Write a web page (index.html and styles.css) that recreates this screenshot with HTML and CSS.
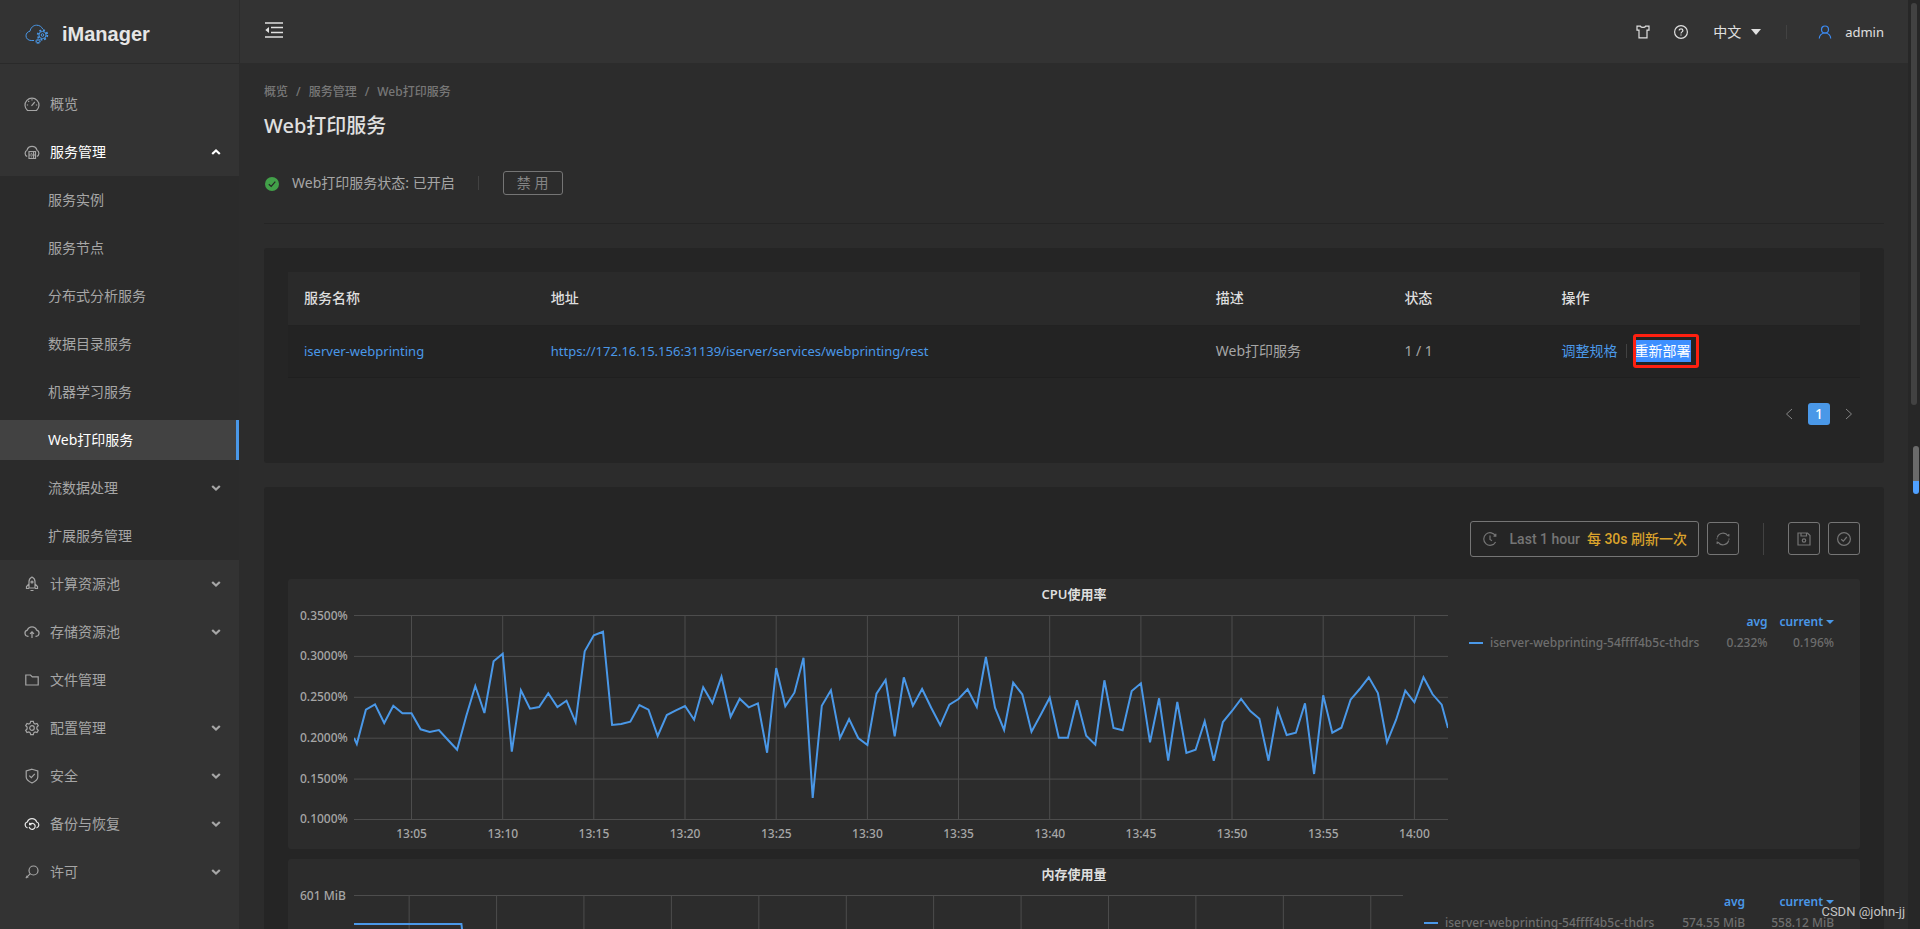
FILE: index.html
```html
<!DOCTYPE html>
<html lang="zh-CN">
<head>
<meta charset="utf-8">
<title>iManager - Web打印服务</title>
<link rel="stylesheet" href="styles.css">
</head>
<body>
<svg class="sprite" aria-hidden="true">
  <symbol id="i-down" viewBox="0 0 10 8"><path d="M1.2 2 5 5.6 8.8 2" stroke-width="2.2"/></symbol>
  <symbol id="i-up" viewBox="0 0 10 8"><path d="M1.2 6 5 2.4 8.8 6" stroke-width="2.2"/></symbol>
</svg>
<div class="app">
  <aside class="sidebar">
    <div class="brand">
      <svg class="brand-logo" viewBox="0 0 24 20"><path d="M9 16.5H6.2C3.2 16.5 1 14.5 1 11.8 1 9.4 2.7 7.6 5 7.2 5.6 3.8 8.2 1.2 11.6 1.2c3 0 5.2 1.600 6.200 4"/><circle cx="17.5" cy="11" r="3.6"/><circle cx="17.5" cy="11" r="1.3"/><circle cx="17.5" cy="11" r="4.8" stroke-width="1.8" stroke-dasharray="1.9 1.87"/><circle cx="13" cy="17.3" r="1.5"/><circle cx="13" cy="17.3" r="2.3" stroke-dasharray="1 .8"/></svg>
      <span>iManager</span>
    </div>
    <nav class="menu">
      <a class="item" href="#"><svg class="icon" viewBox="0 0 16 16"><path d="M3.500 14.500a7 7 0 1 1 9 0z"/><path d="M7.500 9.800 10.800 6M8 3.200v1.300M4.300 5l.8.8M2.800 9h1.300M13.200 9h-1.300"/></svg><span>概览</span></a>
      <a class="item open" href="#"><svg class="icon" viewBox="0 0 16 16"><path d="M3.200 12.500A3.500 3.500 0 0 1 3 6.200a5.200 5.200 0 0 1 10 0 3.500 3.500 0 0 1-.2 6.300"/><path d="M5 7.500h6.500v7H5zM5 11h6.500M6.800 9.300h1M6.800 12.800h1M9.500 7.500v7"/></svg><span>服务管理</span><svg class="chev"><use href="#i-up"/></svg></a>
      <div class="submenu">
        <a class="item" href="#"><span>服务实例</span></a>
        <a class="item" href="#"><span>服务节点</span></a>
        <a class="item" href="#"><span>分布式分析服务</span></a>
        <a class="item" href="#"><span>数据目录服务</span></a>
        <a class="item" href="#"><span>机器学习服务</span></a>
        <a class="item active" href="#"><span>Web打印服务</span></a>
        <a class="item" href="#"><span>流数据处理</span><svg class="chev"><use href="#i-down"/></svg></a>
        <a class="item" href="#"><span>扩展服务管理</span></a>
      </div>
      <a class="item" href="#"><svg class="icon" viewBox="0 0 16 16"><path d="M5 12V5.500C5 3.400 6.400 1.800 8 1c1.600.8 3 2.400 3 4.500V12zM5 8l-2.500 2.500V12.500H5M11 8l2.500 2.500V12.500H11M6.500 14.500h3"/><circle cx="8" cy="6" r="1"/></svg><span>计算资源池</span><svg class="chev"><use href="#i-down"/></svg></a>
      <a class="item" href="#"><svg class="icon" viewBox="0 0 16 16"><path d="M4.500 12.300H4A3.100 3.100 0 0 1 3.300 6.200a5 5 0 0 1 9.400 0A3.100 3.100 0 0 1 12 12.300h-.5M8 14V8M6 9.800l2-2 2 2"/></svg><span>存储资源池</span><svg class="chev"><use href="#i-down"/></svg></a>
      <a class="item" href="#"><svg class="icon" viewBox="0 0 16 16"><path d="M1.800 3h4.700l1.800 1.800h5.900V13H1.800z"/></svg><span>文件管理</span></a>
      <a class="item" href="#"><svg class="icon" viewBox="0 0 16 16"><path d="M6.700 1.300h2.600l.5 1.900 1.300.8 1.900-.6 1.300 2.300-1.400 1.400v1.800l1.400 1.400-1.300 2.300-1.900-.6-1.300.8-.5 1.900H6.700l-.5-1.900-1.300-.8-1.900.6-1.300-2.300 1.400-1.400V7.100L1.700 5.700 3 3.400l1.900.6 1.300-.8z"/><circle cx="8" cy="8" r="2.300"/></svg><span>配置管理</span><svg class="chev"><use href="#i-down"/></svg></a>
      <a class="item" href="#"><svg class="icon" viewBox="0 0 16 16"><path d="M8 1.200 13.800 3v6c0 2.600-2.600 4.500-5.800 6-3.200-1.500-5.800-3.400-5.800-6V3zM5.300 7.600l2 2 3.500-3.800"/></svg><span>安全</span><svg class="chev"><use href="#i-down"/></svg></a>
      <a class="item" href="#"><svg class="icon bright" viewBox="0 0 16 16"><path d="M3.500 11.800A3 3 0 0 1 3.300 6a5 5 0 0 1 9.400 0 3 3 0 0 1-.2 5.800"/><path d="M6 8.200a3 3 0 1 1-.8 2.600M5.600 6.800v1.900h1.900"/></svg><span>备份与恢复</span><svg class="chev"><use href="#i-down"/></svg></a>
      <a class="item" href="#"><svg class="icon" viewBox="0 0 16 16"><circle cx="9.500" cy="6.500" r="4.500"/><path d="M6.300 9.700 1.800 14.200M2.400 11.800l1.800 1.800"/></svg><span>许可</span><svg class="chev"><use href="#i-down"/></svg></a>
    </nav>
  </aside>

  <div class="main">
    <header class="topbar">
      <button class="fold" aria-label="收起菜单"><svg viewBox="0 0 18 16"><path d="M0 1h18M6 5.500h12M6 10.500h12M0 15h18" stroke-width="1.500"/><path class="solid" d="M4 5v6L.3 8z"/></svg></button>
      <div class="tools">
        <button aria-label="主题"><svg class="tool" viewBox="0 0 14 14"><path d="M1 1.200h3.400c.6 1.600 4.600 1.600 5.200 0H13v4H11v7.600H3V5.200H1z"/></svg></button>
        <button class="help" aria-label="帮助"><svg class="tool" viewBox="0 0 14 14"><circle cx="7" cy="7" r="6.400"/><path d="M5.200 5.600c0-2.300 3.700-2.200 3.700 0 0 1.300-1.900 1.300-1.900 2.800M7 9.500v1"/></svg></button>
        <button class="lang">中文<svg class="caret" viewBox="0 0 10 6"><path class="solid" d="M0 0h10L5 6z"/></svg></button>
        <span class="bar"></span>
        <button class="user"><svg class="tool" viewBox="0 0 14 14"><circle cx="7" cy="4.500" r="3.500"/><path d="M1.300 13.500c0-3 2.300-5.500 5.700-5.500s5.700 2.500 5.700 5.500"/></svg>admin</button>
      </div>
    </header>

    <main class="content">
      <nav class="crumbs"><a href="#">概览</a><i>/</i><a href="#">服务管理</a><i>/</i><span>Web打印服务</span></nav>
      <h1>Web打印服务</h1>
      <div class="status">
        <svg class="ok" viewBox="0 0 14 14"><circle cx="7" cy="7" r="7"/><path d="M3.800 7.200 6.200 9.500 10.300 4.700"/></svg>
        <span>Web打印服务状态: 已开启</span>
        <span class="bar"></span>
        <button class="disable">禁 用</button>
      </div>

      <section class="card services">
        <table class="grid">
          <colgroup><col class="c-name"><col class="c-url"><col class="c-desc"><col class="c-state"><col class="c-ops"></colgroup>
          <thead><tr><th>服务名称</th><th>地址</th><th>描述</th><th>状态</th><th>操作</th></tr></thead>
          <tbody><tr>
            <td class="latin"><a href="#">iserver-webprinting</a></td>
            <td class="latin"><a href="#">https://172.16.15.156:31139/iserver/services/webprinting/rest</a></td>
            <td>Web打印服务</td>
            <td>1 / 1</td>
            <td><div class="ops"><a href="#">调整规格</a><span class="bar"></span><a class="selected" href="#">重新部署</a></div></td>
          </tr></tbody>
        </table>
        <div class="pager">
          <button aria-label="上一页"><svg viewBox="0 0 8 12"><path d="M7 1 1.500 6 7 11"/></svg></button>
          <button class="current">1</button>
          <button aria-label="下一页"><svg viewBox="0 0 8 12"><path d="M1 1 6.500 6 1 11"/></svg></button>
        </div>
      </section>

      <section class="card monitor">
        <div class="actions">
          <button class="range"><svg class="tool" viewBox="0 0 14 14"><path d="M12.600 4A6.300 6.300 0 1 0 12.600 10M7 3.500V7.500l2 1.200M12.800 1.800V4.200h-2.300"/></svg><b>Last 1 hour</b><em>每 30s 刷新一次</em></button>
          <button class="square" aria-label="刷新"><svg class="tool" viewBox="0 0 14 14"><path d="M1.300 5.500A6 6 0 0 1 12 3.800M12.700 8.500A6 6 0 0 1 2 10.200M12.800 2v2.600M1.200 12V9.400M.5 6.800h1M12.500 7.200h1"/></svg></button>
          <span class="bar tall"></span>
          <button class="square" aria-label="保存"><svg class="tool" viewBox="0 0 14 14"><path d="M1 1h9.500L13 3.500V13H1zM4 1v3h5.500V1"/><circle cx="7" cy="8.500" r="1.700"/></svg></button>
          <button class="square" aria-label="确认"><svg class="tool" viewBox="0 0 14 14"><circle cx="7" cy="7" r="6.400"/><path d="M4.200 7.200 6.300 9.200 9.800 5"/></svg></button>
        </div>

        <article class="panel">
          <h2>CPU使用率</h2>
          <div class="chart">
            <div class="yaxis"><span>0.3500%</span><span>0.3000%</span><span>0.2500%</span><span>0.2000%</span><span>0.1500%</span><span>0.1000%</span></div>
            <div class="plot">
              <svg id="cpu" viewBox="0 0 1094 205" preserveAspectRatio="none"></svg>
              <div class="xaxis"></div>
            </div>
            <table class="legend cpu">
              <colgroup><col class="l-name"><col><col></colgroup>
              <thead><tr><th></th><th>avg</th><th>current<svg class="sort" viewBox="0 0 8 4"><path class="solid" d="M0 0h8L4 4z"/></svg></th></tr></thead>
              <tbody><tr><td><i class="swatch"></i>iserver-webprinting-54ffff4b5c-thdrs</td><td>0.232%</td><td>0.196%</td></tr></tbody>
            </table>
          </div>
        </article>

        <article class="panel">
          <h2>内存使用量</h2>
          <div class="chart">
            <div class="yaxis"><span>601 MiB</span></div>
            <div class="plot">
              <svg id="mem" viewBox="0 0 1094 205" preserveAspectRatio="none"></svg>
            </div>
            <table class="legend mem">
              <colgroup><col class="l-name"><col><col></colgroup>
              <thead><tr><th></th><th>avg</th><th>current<svg class="sort" viewBox="0 0 8 4"><path class="solid" d="M0 0h8L4 4z"/></svg></th></tr></thead>
              <tbody><tr><td><i class="swatch"></i>iserver-webprinting-54ffff4b5c-thdrs</td><td>574.55 MiB</td><td>558.12 MiB</td></tr></tbody>
            </table>
          </div>
        </article>
      </section>
    </main>
  </div>
  <div class="gutter"><span class="thumb"></span><span class="thumb outer"></span></div>
  <div class="watermark">CSDN @john-jj</div>
</div>
<script src="charts.js"></script>
</body>
</html>
```
FILE: charts.js
```js
// One sample every 30 s, the first at 13:02:00; values are in 1/615 of the plot height.
const cpu = [
  387,284,268,324,272,295,295,343,351,345,375,404,304,213,294,139,116,410,226,281,
  276,235,276,257,322,109,61,50,330,327,320,270,284,363,300,286,273,314,217,264,
  185,305,251,277,265,413,159,274,233,128,549,272,226,369,312,369,390,236,195,364,
  187,272,222,278,331,269,252,223,276,126,278,345,203,238,350,300,248,368,368,256,
  362,389,196,339,346,228,205,382,250,437,261,414,404,319,437,321,288,252,288,311,
  437,283,360,353,265,477,241,353,338,254,222,187,234,382,314,227,262,187,238,269
];
const W = 1094, H = 205, STEP = 9.117, FIRST = 2.8;
const pts = [[0, 369], ...cpu.map((v, i) => [FIRST + i * STEP, v]), [W, 339]]
  .map(([x, v]) => x.toFixed(1) + ',' + (v / 3).toFixed(1)).join(' ');

function draw(id, rows, line) {
  let s = '';
  for (let i = 0; i < rows; i++) {
    const y = Math.min(H - 0.5, 0.5 + i * 40.9);
    s += `<path class="rule" d="M0 ${y}H${W}"/>`;
  }
  for (let i = 0; i < 12; i++) {
    s += `<path class="rule" d="M${(57.5 + i * 91.17).toFixed(1)} 0V${H}"/>`;
  }
  document.getElementById(id).innerHTML = s + `<polyline class="series" points="${line}"/>`;
}
draw('cpu', 6, pts);
draw('mem', 6, '0,29 112,29 116,60 300,70 1094,80');

const labels = Array.from({ length: 12 }, (_, i) => {
  const m = 5 + i * 5;
  return `<span>${m < 60 ? '13:' + String(m).padStart(2, '0') : '14:00'}</span>`;
}).join('');
document.querySelector('.xaxis').innerHTML = labels;
```
FILE: styles.css
```css
* { box-sizing: border-box; }
body {
  margin: 0;
  background: #2c2c2c;
  color: #a6a6a6;
  font: 14px/22px "Noto Sans", "Noto Sans CJK SC", sans-serif;
}
a { color: inherit; text-decoration: none; }
button { padding: 0; border: 0; background: none; color: inherit; font: inherit; }
svg { display: block; flex: none; fill: none; stroke: currentColor; stroke-width: 1; }
.solid { fill: currentColor; stroke: none; }
.sprite { position: absolute; width: 0; height: 0; }

.app { position: relative; display: flex; height: 100vh; overflow: hidden; }

/* Sidebar */
.sidebar { flex: none; width: 240px; background: #333; border-right: 1px solid #2c2c2c; }
.brand {
  display: flex; align-items: center; gap: 13px;
  height: 64px; padding: 4px 25px 0; border-bottom: 1px solid #2a2a2a;
  color: #e6e6e6; font: bold 20px/24px "Liberation Sans", sans-serif;
}
.brand-logo { width: 24px; height: 20px; color: #4a98e8; }
.menu { padding-top: 16px; }
.item { display: flex; align-items: center; height: 40px; margin: 4px 0; padding: 0 18px 0 24px; }
.menu > .item:first-child { margin-bottom: 8px; }
.item + .item { margin-top: 8px; }
.menu > .item:nth-child(2) { margin-bottom: 4px; }
.icon { width: 16px; height: 16px; margin-right: 10px; stroke-width: 1.2; }
.icon.bright { color: #e6e6e6; }
.chev { width: 10px; height: 8px; margin-left: auto; }
.open { color: #fff; }
.open .icon { color: #a6a6a6; }
.submenu { padding: 4px 0; background: #2b2b2b; }
.submenu .item { padding-left: 48px; margin: 0; }
.submenu .item + .item { margin-top: 8px; }
.submenu .active { background: #424242; color: #fff; border-right: 3px solid #4a98e8; }

/* Top bar */
.main { flex: 1; min-width: 0; }
.topbar {
  display: flex; align-items: center; justify-content: space-between;
  height: 63px; padding: 0 24px 0 25px; background: #333; color: #e0e0e0;
}
.fold { margin-bottom: 3px; }
.fold svg { width: 18px; height: 16px; }
.tools { display: flex; align-items: center; }
.tool { width: 14px; height: 14px; stroke-width: 1.2; }
.help { margin-left: 24px; }
.lang { display: flex; align-items: center; gap: 10px; margin-left: 25px; }
.caret { width: 10px; height: 6px; }
.bar { flex: none; width: 1px; height: 14px; background: #424242; }
.tools .bar { margin: 0 31px 0 25px; }
.user { display: flex; align-items: center; gap: 13px; font-size: 13px; }
.user .tool { color: #3d8bf2; }

/* Page heading */
.content { padding: 18px 24px 0; }
.crumbs { display: flex; gap: 8px; color: #777; font-size: 12px; font-weight: 500; }
.crumbs i { font-style: normal; }
h1 { margin: 9px 0 0; color: #e0e0e0; font-size: 20px; line-height: 28px; font-weight: 500; }
.status {
  display: flex; align-items: center; height: 84px; padding-top: 2px;
  border-bottom: 1px solid #252525;
}
.ok { width: 14px; height: 14px; margin: 3px 13px 0 1px; }
.ok circle { fill: #42a049; stroke: none; }
.ok path { stroke: #252525; stroke-width: 1.2; }
.status .bar { margin: 0 24px 0 23px; }
.disable {
  width: 60px; height: 24px; border: 1px solid #757575; border-radius: 3px;
  color: #858585; line-height: 20px;
}

/* Service table */
.card { background: #252525; border-radius: 3px; }
.services { margin-top: 24px; padding: 24px 24px 38px; }
.grid { width: 100%; table-layout: fixed; border-collapse: collapse; }
.c-name { width: 15.7%; }
.c-url { width: 42.3%; }
.c-desc { width: 12%; }
.c-state { width: 10%; }
.grid th, .grid td { height: 52px; padding: 0 16px; text-align: left; border-bottom: 1px solid #1f1f1f; }
.grid th { height: 53px; background: #2a2a2a; color: #dedede; font-weight: 500; border-bottom-color: #222; }
.grid td { background: #232323; }
.grid .latin { font-size: 13px; }
.grid a { color: #4a98e8; }
.ops { display: flex; align-items: center; }
.ops .bar { margin: 0 8px; }
.grid .selected { position: relative; background: #3d8fff; color: #fff; }
.selected::after {
  content: ""; position: absolute; inset: -6px -8px -6px -2px;
  border: 3px solid #ff2010; border-radius: 3px;
}
.pager { display: flex; align-items: center; justify-content: flex-end; gap: 15px; padding: 25px 7px 0 0; color: #858585; }
.pager svg { width: 8px; height: 12px; }
.pager .current { width: 22px; height: 22px; border-radius: 3px; background: #4a98e8; color: #fff; font-weight: 500; }

/* Monitoring */
.monitor { margin-top: 24px; padding: 34px 24px 24px; }
.actions { display: flex; align-items: center; justify-content: flex-end; gap: 8px; height: 36px; margin-bottom: 22px; color: #757575; }
.range {
  display: flex; align-items: center; height: 36px; padding: 0 11px 0 12px;
  border: 1px solid #757575; border-radius: 3px;
  font-family: Roboto, "Noto Sans CJK SC", sans-serif;
}
.range b { margin: 0 7px 0 13px; font-weight: 500; }
.range em { color: #dba32c; font-style: normal; font-weight: 500; }
.square { display: grid; place-items: center; width: 32px; height: 33px; border: 1px solid #757575; border-radius: 3px; }
.bar.tall { height: 32px; margin: 0 16px; }
.panel { height: 270px; margin-bottom: 10px; background: #2c2c2c; border-radius: 3px; }
.panel h2 { margin: 0; padding: 5px 0 0; color: #dedede; font-size: 13px; line-height: 20px; font-weight: 600; text-align: center; }
.chart { display: flex; padding: 11px 26px 0 12px; font-size: 12px; line-height: 20px; font-weight: 500; }
.yaxis { display: flex; flex-direction: column; justify-content: space-between; width: 48px; height: 224px; margin-top: -9px; color: #a6a6a6; white-space: nowrap; }
.plot { flex: 1; min-width: 0; margin: 0 21px 0 6px; }
.plot svg { width: 100%; height: 205px; }
.rule { stroke: #4d4d4d; stroke-width: 1; vector-effect: non-scaling-stroke; }
.series { stroke: #4a98e8; stroke-width: 2; vector-effect: non-scaling-stroke; }
.xaxis { display: flex; margin: 4px -12px 0 12px; }
.xaxis span { flex: 1; text-align: center; }
.legend { flex: none; align-self: flex-start; table-layout: fixed; border-collapse: collapse; margin-top: -3px; color: #6e6e6e; white-space: nowrap; }
.legend.cpu { width: 365px; }
.legend.mem { width: 410px; }
.l-name { width: 232px; }
.legend th, .legend td { padding: 0 0 1px; text-align: right; }
.legend th { color: #4a98e8; font-weight: 600; }
.legend td:first-child { text-align: left; }
.swatch { display: inline-block; width: 14px; height: 2px; margin-right: 7px; background: #4a98e8; vertical-align: middle; }
.sort { display: inline-block; width: 8px; height: 4px; margin-left: 3px; vertical-align: middle; }

/* Scroll track */
.gutter { position: relative; flex: none; width: 12px; background: #272727; }
.thumb { position: absolute; top: 3px; left: 3px; width: 6px; height: 402px; border-radius: 3px; background: #424242; }
.thumb.outer { top: 446px; left: 5px; height: 48px; background: linear-gradient(#6b6b6b 72%, #4fa0ff 72%); }
.watermark { position: absolute; right: 15px; bottom: 6px; color: #c4c4c4; font: 13px/22px Roboto, sans-serif; }
```
